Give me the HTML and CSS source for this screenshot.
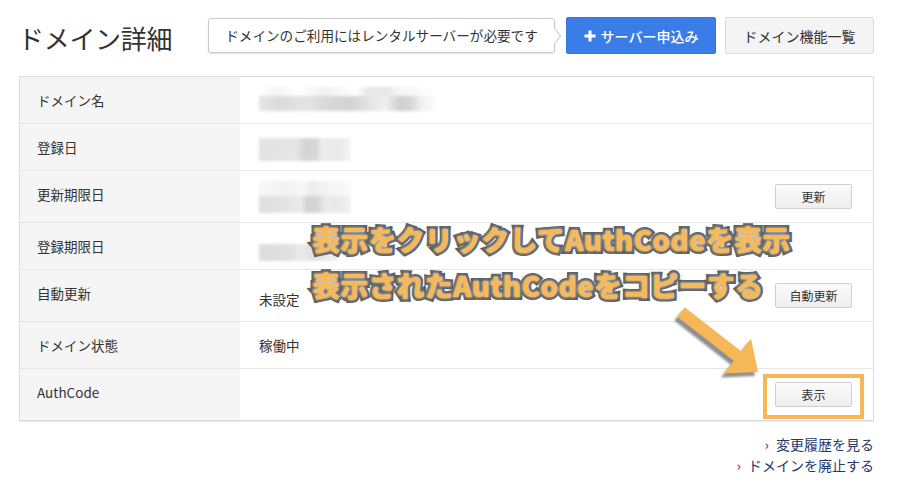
FILE: index.html
```html
<!DOCTYPE html>
<html lang="ja">
<head>
<meta charset="utf-8">
<title>ドメイン詳細</title>
<link rel="stylesheet" href="styles.css">
</head>
<body>
<div class="page">
  <header class="head">
    <h1 class="title">ドメイン詳細</h1>
    <div class="actions">
      <div class="notice">ドメインのご利用にはレンタルサーバーが必要です</div>
      <a class="btn btn-primary" href="#"><svg class="plus" viewBox="0 0 12 12" width="12" height="12"><path d="M6 0.5V11.5M0.5 6H11.5" stroke="#fff" stroke-width="3"/></svg>サーバー申込み</a>
      <a class="btn btn-default" href="#">ドメイン機能一覧</a>
    </div>
  </header>

  <div class="detail">
    <div class="row">
      <div class="label">ドメイン名</div>
      <div class="value"><div class="blur blur-name"><span class="b-top"></span><span class="b-bot"></span></div></div>
    </div>
    <div class="row">
      <div class="label">登録日</div>
      <div class="value"><div class="blur blur-date"></div></div>
    </div>
    <div class="row row-btn">
      <div class="label">更新期限日</div>
      <div class="value"><div class="blur blur-date2"><span class="b-top"></span><span class="b-bot"></span></div><a class="sbtn" href="#">更新</a></div>
    </div>
    <div class="row">
      <div class="label">登録期限日</div>
      <div class="value"><div class="blur blur-date3"></div></div>
    </div>
    <div class="row row-btn">
      <div class="label">自動更新</div>
      <div class="value"><span class="val-text val-low">未設定</span><a class="sbtn" href="#">自動更新</a></div>
    </div>
    <div class="row">
      <div class="label">ドメイン状態</div>
      <div class="value"><span class="val-text">稼働中</span></div>
    </div>
    <div class="row row-btn row-last">
      <div class="label">AuthCode</div>
      <div class="value"><span></span><a class="sbtn" href="#">表示</a></div>
    </div>
  </div>

  <ul class="links">
    <li><a href="#"><span class="chev">›</span>変更履歴を見る</a></li>
    <li><a href="#"><span class="chev">›</span>ドメインを廃止する</a></li>
  </ul>

  <div class="note note-1">表示をクリックしてAuthCodeを表示</div>
  <div class="note note-2">表示されたAuthCodeをコピーする</div>
  <svg class="arrow" viewBox="0 0 900 494" width="900" height="494">
    <defs>
      <filter id="soft" x="-20%" y="-20%" width="140%" height="140%"><feGaussianBlur stdDeviation="1.2"/></filter>
    </defs>
    <polygon filter="url(#soft)" fill="#8f8f8f" points="681.7,311.3 738.2,355.3 748,342.6 755,376 721,377.4 730.8,364.7 674.3,320.7"/>
    <polygon fill="#f6b857" points="684.7,307.3 741.2,351.3 751,338.6 758,372 724,373.4 733.8,360.7 677.3,316.7"/>
  </svg>
  <div class="highlight"></div>
</div>
</body>
</html>
```

FILE: styles.css
```css
* { box-sizing: border-box; }

body {
  margin: 0;
  background: #fff;
  font-family: "Noto Sans CJK JP", "Noto Sans", "Liberation Sans", sans-serif;
  color: #333;
}

.page {
  position: relative;
  width: 855px;
  margin-left: 19px;
}

.head {
  display: flex;
  justify-content: space-between;
  align-items: flex-start;
  padding-top: 17px;
  height: 54px;
}

.title {
  margin: 8px 0 0 -1px;
  font-size: 26px;
  line-height: 26px;
  font-weight: 400;
  color: #333;
  letter-spacing: -0.3px;
}

.actions {
  display: flex;
  align-items: flex-start;
}

.notice {
  position: relative;
  margin-top: 1px;
  width: 347px;
  height: 35px;
  border: 1px solid #c9c9c9;
  border-radius: 3px;
  box-shadow: 0 1px 2px rgba(0,0,0,0.12);
  background: #fff;
  font-size: 13.6px;
  line-height: 33px;
  text-align: center;
  color: #333;
  margin-right: 11px;
}

.notice::before {
  content: "";
  position: absolute;
  right: -6px;
  top: 12px;
  width: 9px;
  height: 9px;
  background: #fff;
  border-top: 1px solid #c9c9c9;
  border-right: 1px solid #c9c9c9;
  transform: rotate(45deg) skew(8deg, 8deg);
}

.btn {
  display: flex;
  align-items: center;
  justify-content: center;
  height: 37px;
  border-radius: 2px;
  font-size: 14px;
  text-decoration: none;
}

.btn-primary {
  width: 150px;
  background: #3b7de8;
  color: #fff;
  font-weight: 500;
  margin-right: 9px;
  border: 1px solid #3474dd;
}

.plus {
  margin-right: 5px;
}

.btn-default {
  width: 149px;
  background: #f4f4f4;
  border: 1px solid #dcdcdc;
  color: #333;
}

.detail {
  margin-top: 22px;
  border: 1px solid #dcdcdc;
  box-shadow: 0 1px 0 #e8e8e8;
}

.row {
  display: grid;
  grid-template-columns: 220px 1fr;
  border-bottom: 1px solid #e6e6e6;
}

.row-last {
  border-bottom: none;
}

.label {
  background: #f5f5f5;
  padding: 13px 17px;
  font-size: 13.5px;
  line-height: 20px;
  color: #333;
  min-height: 46px;
}

.value {
  display: flex;
  align-items: center;
  justify-content: space-between;
  padding: 0 21px 0 19px;
  min-height: 46px;
  font-size: 13.5px;
  line-height: 20px;
}

.row-btn .label,
.row-btn .value {
  min-height: 51px;
}

.val-low {
  margin-top: 6px;
}

.sbtn {
  display: flex;
  align-items: center;
  justify-content: center;
  width: 77px;
  height: 25px;
  border: 1px solid #cfcfcf;
  border-radius: 2px;
  background: linear-gradient(#fbfbfb, #eeeeee);
  font-size: 12px;
  color: #333;
  text-decoration: none;
}

.blur {
  filter: blur(1.6px);
  display: flex;
  flex-direction: column;
}

.blur-name {
  width: 176px;
  height: 26px;
  margin-top: 0;
}

.blur-name .b-top {
  height: 9px;
  background: linear-gradient(90deg, #fff 0, #f4f4f4 10%, #fff 22%, #f0f0f0 38%, #fff 55%, #e8e8e8 62%, #e6e6e6 72%, #f5f5f5 80%, #fff 100%);
}

.blur-name .b-bot {
  height: 15px;
  background: linear-gradient(90deg, #e6e6e6 0, #dadada 12%, #e4e4e4 26%, #d8d8d8 40%, #d2d2d2 52%, #e6e6e6 64%, #f0f0f0 72%, #cfcfcf 80%, #d6d6d6 86%, #f0f0f0 92%, #fafafa 100%);
}

.blur-date {
  width: 92px;
  height: 23px;
  margin-top: 4px;
  background: linear-gradient(90deg, #e2e2e2 0, #e6e6e6 40%, #d4d4d4 50%, #d6d6d6 62%, #ececec 68%, #eaeaea 88%, #f6f6f6 100%);
}

.blur-date2 {
  width: 92px;
  height: 32px;
}

.blur-date2 .b-top {
  height: 15px;
  background: linear-gradient(90deg, #f7f7f7 0, #f2f2f2 30%, #f8f8f8 48%, #ececec 56%, #f4f4f4 75%, #fafafa 100%);
}

.blur-date2 .b-bot {
  height: 17px;
  background: linear-gradient(90deg, #dedede 0, #e4e4e4 30%, #ebebeb 46%, #d2d2d2 52%, #d6d6d6 64%, #ebebeb 72%, #e8e8e8 88%, #f4f4f4 100%);
}

.blur-date3 {
  width: 80px;
  height: 17px;
  margin-top: 12px;
  background: linear-gradient(90deg, #dcdcdc 0, #e0e0e0 40%, #eaeaea 52%, #e0e0e0 70%, #f2f2f2 100%);
}

.links {
  list-style: none;
  margin: 13px 0 0;
  padding: 0;
  text-align: right;
  font-size: 14px;
  line-height: 21px;
}

.links a {
  color: #27386b;
  text-decoration: none;
}

.chev {
  color: #c8333a;
  font-size: 13px;
  margin-right: 7px;
  font-weight: 700;
}

.note {
  position: absolute;
  left: 293px;
  font-family: "Noto Sans CJK JP", sans-serif;
  font-weight: 900;
  font-size: 28px;
  line-height: 30px;
  color: #f7b955;
  -webkit-text-stroke: 6px #5e5e5e;
  paint-order: stroke fill;
  letter-spacing: 0.2px;
  white-space: nowrap;
  text-shadow: 0 0 3px rgba(255,255,255,0.9);
}

.note-1 { top: 224px; }
.note-2 { top: 270px; }

.arrow {
  position: absolute;
  left: -19px;
  top: 0;
  pointer-events: none;
}

.highlight {
  position: absolute;
  left: 744px;
  top: 374px;
  width: 101px;
  height: 45px;
  border: 4px solid #f6b857;
}
```
